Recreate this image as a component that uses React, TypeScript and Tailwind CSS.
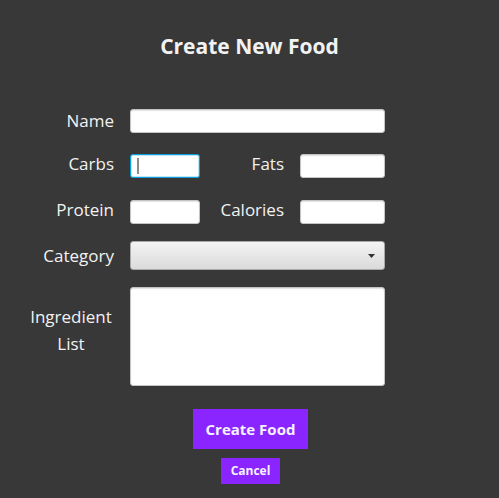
import React from 'react';

// Plain white text field used in the form grid
const Field: React.FC<{ className?: string }> = ({ className = '' }) => (
  <div
    className={`h-[24px] bg-white border border-[#c4c4c4] rounded-[3px] shadow-[inset_0_1px_1px_rgba(0,0,0,0.12)] ${className}`}
  />
);

const Label: React.FC<{ children: React.ReactNode; className?: string }> = ({ children, className = '' }) => (
  <div className={`text-right text-[17px] leading-[24px] text-[#f2f2f2] ${className}`}>{children}</div>
);

const App: React.FC = () => {
  return (
    <div
      className="w-[499px] h-[498px] bg-[#383838] flex flex-col"
      style={{ fontFamily: '"Open Sans", "Noto Sans", sans-serif' }}
    >
      <h1 className="mt-[32px] text-center text-[21px] leading-[28px] font-bold text-[#f2f2f2]">
        Create New Food
      </h1>

      <div className="mt-[49px] flex flex-col">
        {/* Name */}
        <div className="flex items-center">
          <Label className="w-[114px]">Name</Label>
          <Field className="ml-[16px] w-[255px]" />
        </div>

        {/* Carbs / Fats */}
        <div className="mt-[21px] h-[24px] flex items-center">
          <Label className="w-[114px] mb-[4px]">Carbs</Label>
          <div className="ml-[16px] w-[70px] h-[24px] bg-white border border-[#0a9fd8] rounded-[3px] shadow-[inset_0_0_0_1px_#bfe6f6] flex items-center">
            <span className="ml-[6px] w-[2px] h-[16px] bg-[#8c8c8c]" />
          </div>
          <Label className="w-[84px] mb-[4px]">Fats</Label>
          <Field className="ml-[16px] w-[85px]" />
        </div>

        {/* Protein / Calories */}
        <div className="mt-[22px] h-[24px] flex items-center">
          <Label className="w-[114px] mb-[4px]">Protein</Label>
          <Field className="ml-[16px] w-[70px]" />
          <Label className="w-[84px] mb-[4px]">Calories</Label>
          <Field className="ml-[16px] w-[85px]" />
        </div>

        {/* Category */}
        <div className="mt-[17px] flex items-center">
          <Label className="w-[114px]">Category</Label>
          <div className="ml-[16px] w-[255px] h-[29px] rounded-[3px] border border-[#a9a9a9] bg-gradient-to-b from-[#f4f4f4] to-[#dadada] flex items-center justify-end pr-[9px]">
            <svg width="7" height="4" viewBox="0 0 7 4">
              <path d="M0 0 L7 0 L3.5 4 Z" fill="#333333" />
            </svg>
          </div>
        </div>

        {/* Ingredient List */}
        <div className="mt-[17px] flex items-start">
          <div className="w-[114px] pt-[16px] flex justify-center text-center text-[17px] leading-[27px] text-[#f2f2f2]">
            <span className="pl-[28px]">
              Ingredient
              <br />
              List
            </span>
          </div>
          <div className="ml-[16px] w-[255px] h-[99px] bg-white border border-[#c4c4c4] rounded-[3px] shadow-[inset_0_1px_1px_rgba(0,0,0,0.12)]" />
        </div>
      </div>

      <div className="mt-[23px] flex flex-col items-center pl-[2px]">
        <button className="w-[115px] h-[40px] bg-[#8a25ff] text-[15px] font-bold text-[#f6f2ff]">
          Create Food
        </button>
        <button className="mt-[9px] w-[59px] h-[26px] bg-[#8a25ff] text-[12px] font-bold text-[#f6f2ff]">
          Cancel
        </button>
      </div>
    </div>
  );
};

export default App;
